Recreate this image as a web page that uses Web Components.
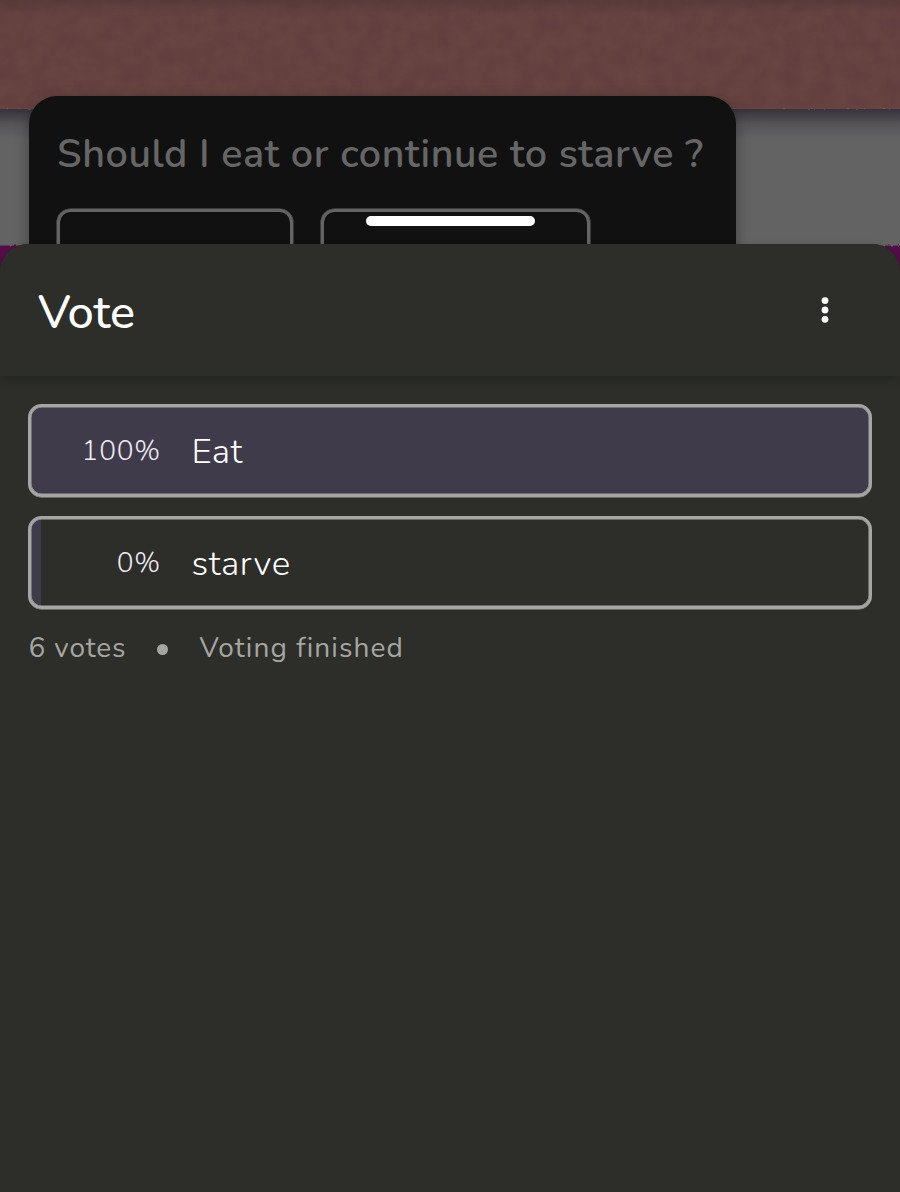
<!DOCTYPE html>
<html lang="en">
<head>
<meta charset="utf-8">
<title>Vote</title>
<style>
html, body { margin: 0; background: #2d2e2a; }
body { font-family: Nunito, Lato, "Open Sans", sans-serif; overflow: hidden; }
</style>
</head>
<body>
<vote-page></vote-page>
<script>
const define = (name, html) => {
  const tpl = document.createElement('template');
  tpl.innerHTML = html;
  customElements.define(name, class extends HTMLElement {
    constructor() {
      super();
      this.attachShadow({ mode: 'open' }).append(tpl.content.cloneNode(true));
    }
  });
};

/* Paper-textured wallpaper behind the dimmed chat */
define('chat-wallpaper', `
<style>
:host { display: block; }
svg { display: block; width: 100%; height: 100%; }
</style>
<svg viewBox="0 0 900 290" preserveAspectRatio="none">
  <defs>
    <filter id="rough" x="-5%" y="-10%" width="110%" height="120%">
      <feTurbulence type="fractalNoise" baseFrequency=".22" numOctaves="2" seed="4" result="n"/>
      <feDisplacementMap in="SourceGraphic" in2="n" scale="3"/>
    </filter>
    <filter id="paper" x="0" y="0" width="100%" height="100%" color-interpolation-filters="sRGB">
      <feTurbulence type="fractalNoise" baseFrequency=".06" numOctaves="3" seed="8"/>
      <feColorMatrix values="0 0 0 0 .3  0 0 0 0 .16  0 0 0 0 .19  .3 0 0 0 -.04"/>
    </filter>
    <linearGradient id="shade" x1="0" y1="0" x2="0" y2="1">
      <stop offset="0" stop-color="#35323a"/>
      <stop offset=".2" stop-color="#434046"/>
      <stop offset=".5" stop-color="#555457"/>
      <stop offset="1" stop-color="#636363"/>
    </linearGradient>
    <linearGradient id="top" x1="0" y1="0" x2="0" y2="1">
      <stop offset="0" stop-color="#4d3032" stop-opacity=".5"/>
      <stop offset="1" stop-color="#4d3032" stop-opacity="0"/>
    </linearGradient>
  </defs>
  <rect width="900" height="290" fill="#636363"/>
  <rect y="109" width="900" height="31" fill="url(#shade)"/>
  <rect x="-10" y="-10" width="920" height="119" fill="#674442" filter="url(#rough)"/>
  <rect width="900" height="108" filter="url(#paper)"/>
  <rect width="900" height="14" fill="url(#top)"/>
  <rect x="-10" y="245.5" width="920" height="60" fill="#530f48" filter="url(#rough)"/>
</svg>`);

define('poll-choice', `
<style>
:host { display: block; box-sizing: border-box; height: 80px; border: 3px solid #646464; border-radius: 13.5px; box-shadow: 0 0 0 .5px #646464; }
</style>`);

define('chat-card', `
<style>
:host { display: block; box-sizing: border-box; width: 707.5px; height: 194px; padding: 36px 28px 0;
  border-radius: 28px 28px 0 0; background: #111; color: #666; box-shadow: 0 4px 14px rgba(0,0,0,.34); overflow: hidden; }
h2 { margin: 0 0 0 .5px; font-size: 39.5px; line-height: 45px; font-weight: 600; letter-spacing: .6px; white-space: pre; }
.row { display: grid; grid-template-columns: 236px 269px; gap: 28.5px; margin-top: 32px; }
</style>
<h2><slot></slot></h2>
<div class="row"><poll-choice></poll-choice><poll-choice></poll-choice></div>`);

define('sheet-handle', `
<style>:host { display: block; width: 169px; height: 10px; border-radius: 5px; background: #fff; }</style>`);

define('sheet-header', `
<style>
:host { display: flex; box-sizing: border-box; height: 132px; padding: 5px 71px 0 38px; align-items: center;
  justify-content: space-between; background: #2d2e2a; color: #fff; border-radius: 28px 28px 0 0;
  box-shadow: 0 4px 8px -1px rgba(20,21,17,.42); position: relative; }
h1 { margin: 0; font-size: 47px; line-height: 56px; font-weight: 480; letter-spacing: -.2px; }
svg { display: block; width: 8px; height: 28px; margin-top: -6px; }
</style>
<h1><slot></slot></h1>
<svg viewBox="0 0 8 28" fill="#fff"><circle cx="4" cy="4.6" r="3.4"/><circle cx="4" cy="14" r="3.4"/><circle cx="4" cy="23.3" r="3.4"/></svg>`);

define('poll-option', `
<style>
:host { display: grid; box-sizing: border-box; height: 93px; grid-template-columns: 129px 1fr; column-gap: 31px;
  align-items: center; border: 3px solid #a5a6a4; border-radius: 13.5px; color: #fff; padding-left: 1px; box-shadow: inset 0 0 0 .5px #a5a6a4, 0 .5px 0 0 #a5a6a4;
  background: linear-gradient(#403b4b, #403b4b) 0 0 / var(--fill, 100%) 100% no-repeat; }
.pct { text-align: right; font-size: 28px; line-height: 34px; font-weight: 300; letter-spacing: .8px; color: #eeeaf4; }
.name { font-size: 35px; line-height: 42px; font-weight: 320; letter-spacing: var(--track, 0); padding-top: 3px; margin-left: -.5px; }
</style>
<span class="pct"><slot name="percent"></slot></span>
<span class="name"><slot></slot></span>`);

define('poll-status', `
<style>
:host { display: flex; align-items: center; height: 34px; color: #a5a6a2; font-size: 28px; line-height: 34px; font-weight: 400; white-space: pre; }
i { width: 11px; height: 11px; border-radius: 50%; background: currentColor; margin: 3px 32px 0 30px; }
.a { width: 98px; letter-spacing: .9px; }
.b { letter-spacing: 1.1px; font-variant-ligatures: none; }
</style>
<span class="a"><slot name="count"></slot></span><i></i><span class="b"><slot></slot></span>`);

define('vote-sheet', `
<style>
:host { display: block; height: 948px; background: #2d2e2a; border-radius: 28px 28px 0 0; position: relative; }
.body { display: flex; flex-direction: column; gap: 20px; padding: 28px 28px 0; }
poll-status { margin: 1px 0 0 .5px; }
</style>
<sheet-header>Vote</sheet-header>
<div class="body">
  <poll-option style="--track:.5px"><span slot="percent">100%</span>Eat</poll-option>
  <poll-option style="--fill:10px;--track:.6px;margin-top:-1px"><span slot="percent">0%</span>starve</poll-option>
  <poll-status style="margin-top:2px"><span slot="count">6 votes</span>Voting finished</poll-status>
</div>`);

define('vote-page', `
<style>
:host { display: grid; width: 900px; height: 1192px; grid-template-rows: 244px 948px; overflow: hidden; }
.scene { position: relative; height: 290px; }
chat-wallpaper { position: absolute; inset: 0; }
.chat { position: relative; box-sizing: border-box; padding: 96px 0 0 28.5px; height: 244px; overflow: hidden; }
sheet-handle { position: absolute; left: 365.5px; top: 216px; }
</style>
<div class="scene">
  <chat-wallpaper></chat-wallpaper>
  <div class="chat"><chat-card>Should I eat or continue to starve ?</chat-card></div>
  <sheet-handle></sheet-handle>
</div>
<vote-sheet></vote-sheet>`);
</script>
</body>
</html>
